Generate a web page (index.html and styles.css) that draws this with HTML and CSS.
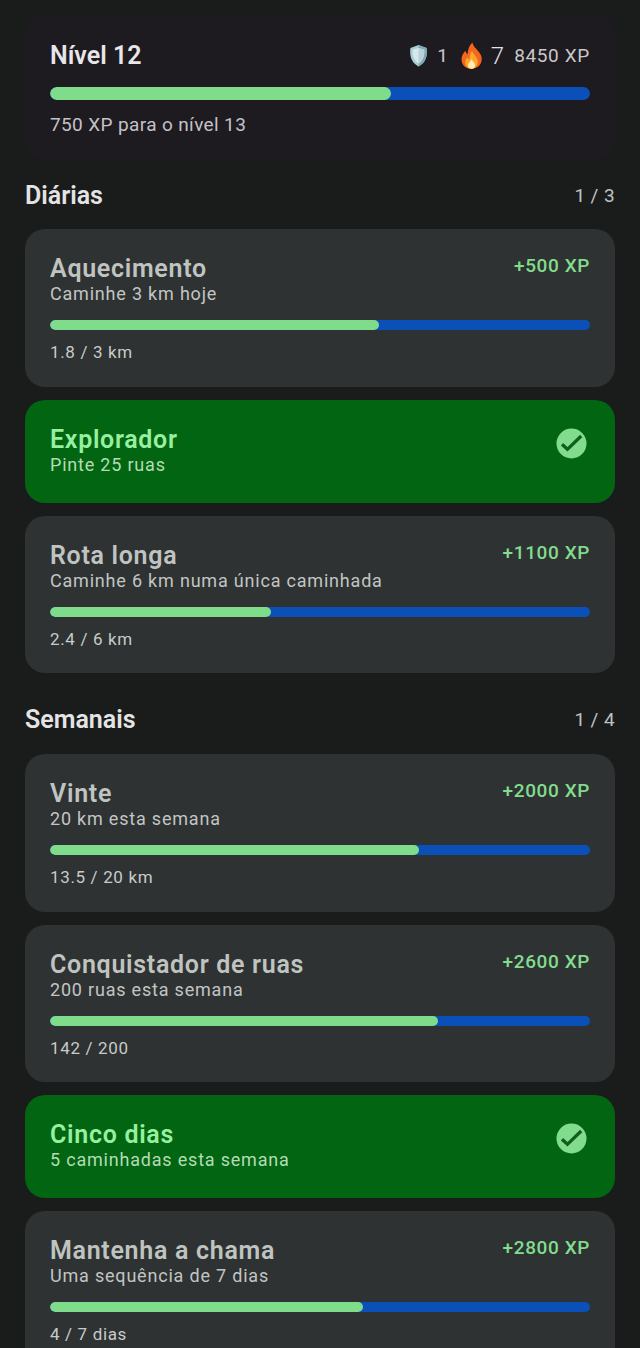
FILE: index.html
```html
<!DOCTYPE html>
<html lang="pt">
<head>
<meta charset="utf-8">
<title>Missões</title>
<link rel="stylesheet" href="styles.css">
</head>
<body>
<main class="screen">
  <section class="level">
    <div class="level-head">
      <h1 class="level-title">Nível 12</h1>
      <div class="stats">
        <svg class="emoji shield" viewBox="0 0 20 24" aria-hidden="true"><path d="M10 1 L18.5 4 C19.5 12 18 19 10 23.5 C2 19 .5 12 1.5 4 Z" fill="#a9cfd6"/><path d="M10 1 L18.5 4 C19.5 12 18 19 10 23.5 Z" fill="#7fa9b2"/><path d="M10 4 L16 6 C16.5 12 15 17 10 20.5 C5 17 3.5 12 4 6 Z" fill="#d8e8ea"/><path d="M10 4 L16 6 C16.5 12 15 17 10 20.5 Z" fill="#b7d2d8"/></svg>
        <span class="stat-num small">1</span>
        <svg class="emoji flame" viewBox="0 0 22 26" aria-hidden="true"><path d="M12 .5 C12.500 5 17.500 7.500 20 12.500 C22.500 18 19.500 25.800 11 25.800 C3.500 25.800 .2 19.500 1.800 14 C2.500 11.500 4 10 5 8.500 C5.600 10 6.200 11.200 7.200 12 C7.500 8 8.500 3.500 12 .5 Z" fill="#f4661c"/><path d="M11.500 8.500 C12.500 12 17 14.500 17 19 C17 23 14.500 25.800 11 25.800 C7.500 25.800 4.800 23 5 19.300 C5.100 17.500 6 16 7 15 C7.500 16 8.200 16.800 9 17 C9 14 9.800 11 11.500 8.500 Z" fill="#fca82e"/><path d="M11 16.500 C12 18.800 14.500 20 14.500 22.300 C14.500 24.300 13 25.800 11 25.800 C9 25.800 7.500 24.300 7.500 22.500 C7.500 20.300 10 18.800 11 16.500 Z" fill="#feeeb4"/></svg>
        <span class="stat-num big">7</span>
        <span class="stat-xp">8450 XP</span>
      </div>
    </div>
    <div class="bar"><div class="bar-fill" style="width:63.2%"></div></div>
    <p class="level-note">750 XP para o nível 13</p>
  </section>

  <section class="group">
    <div class="group-head"><h2 class="group-title">Diárias</h2><span class="group-count">1 / 3</span></div>
    <div class="quests">
      <article class="quest">
        <div class="quest-head">
          <div class="quest-text"><h3 class="quest-title">Aquecimento</h3><p class="quest-desc">Caminhe 3 km hoje</p></div>
          <span class="quest-xp">+500 XP</span>
        </div>
        <div class="bar"><div class="bar-fill" style="width:61%"></div></div>
        <p class="quest-progress">1.8 / 3 km</p>
      </article>
      <article class="quest done">
        <div class="quest-text"><h3 class="quest-title">Explorador</h3><p class="quest-desc">Pinte 25 ruas</p></div>
        <svg class="check" viewBox="0 0 32 32" aria-hidden="true"><circle cx="16" cy="16" r="15.500" fill="#82dc8d"/><path d="M6.200 16.800 L11.800 22 L26 8.300" fill="none" stroke="#115e1c" stroke-width="3.400"/></svg>
      </article>
      <article class="quest">
        <div class="quest-head">
          <div class="quest-text"><h3 class="quest-title">Rota longa</h3><p class="quest-desc">Caminhe 6 km numa única caminhada</p></div>
          <span class="quest-xp">+1100 XP</span>
        </div>
        <div class="bar"><div class="bar-fill" style="width:41%"></div></div>
        <p class="quest-progress">2.4 / 6 km</p>
      </article>
    </div>
  </section>

  <section class="group">
    <div class="group-head"><h2 class="group-title">Semanais</h2><span class="group-count">1 / 4</span></div>
    <div class="quests">
      <article class="quest">
        <div class="quest-head">
          <div class="quest-text"><h3 class="quest-title">Vinte</h3><p class="quest-desc">20 km esta semana</p></div>
          <span class="quest-xp">+2000 XP</span>
        </div>
        <div class="bar"><div class="bar-fill" style="width:68.400%"></div></div>
        <p class="quest-progress">13.5 / 20 km</p>
      </article>
      <article class="quest">
        <div class="quest-head">
          <div class="quest-text"><h3 class="quest-title">Conquistador de ruas</h3><p class="quest-desc">200 ruas esta semana</p></div>
          <span class="quest-xp">+2600 XP</span>
        </div>
        <div class="bar"><div class="bar-fill" style="width:71.900%"></div></div>
        <p class="quest-progress">142 / 200</p>
      </article>
      <article class="quest done">
        <div class="quest-text"><h3 class="quest-title">Cinco dias</h3><p class="quest-desc">5 caminhadas esta semana</p></div>
        <svg class="check" viewBox="0 0 32 32" aria-hidden="true"><circle cx="16" cy="16" r="15.500" fill="#82dc8d"/><path d="M6.200 16.800 L11.800 22 L26 8.300" fill="none" stroke="#115e1c" stroke-width="3.400"/></svg>
      </article>
      <article class="quest">
        <div class="quest-head">
          <div class="quest-text"><h3 class="quest-title">Mantenha a chama</h3><p class="quest-desc">Uma sequência de 7 dias</p></div>
          <span class="quest-xp">+2800 XP</span>
        </div>
        <div class="bar"><div class="bar-fill" style="width:58%"></div></div>
        <p class="quest-progress">4 / 7 dias</p>
      </article>
    </div>
  </section>
</main>
</body>
</html>
```

FILE: styles.css
```css
* { box-sizing: border-box; }
html, body { margin: 0; padding: 0; }
body {
  width: 640px;
  height: 1348px;
  overflow: hidden;
  background: #1a1c1c;
  font-family: Roboto, "Noto Sans", sans-serif;
}
h1, h2, h3, p { margin: 0; font-weight: inherit; }
.screen { padding: 14px 25px 0; }

.level {
  background: #1d1a20;
  border-radius: 20px;
  height: 146px;
  padding: 25px 25px 0;
}
.level-head { display: flex; justify-content: space-between; align-items: center; height: 33px; }
.level-title { font-size: 25px; font-weight: 600; color: #e8e6e8; }
.stats { display: flex; align-items: center; color: #c9c7c9; }
.emoji { display: block; }
.shield { width: 19px; height: 23px; margin-right: 9px; }
.flame { width: 23px; height: 27px; margin-left: 12px; margin-right: 8px; }
.stat-num.small { font-size: 19px; font-weight: 400; }
.stat-num.big { font-size: 24px; font-weight: 300; color: #e4e2e4; }
.stat-xp { font-size: 19px; margin-left: 10px; letter-spacing: .65px; }

.bar { height: 10px; border-radius: 5px; background: #0a50b8; overflow: hidden; }
.level .bar { height: 13px; border-radius: 7px; margin-top: 15px; }
.bar-fill { height: 100%; border-radius: 7px; background: #7fdc8b; }
.level-note { margin-top: 13px; font-size: 19px; color: #c4c2c6; letter-spacing: .37px; line-height: 24px; }

.group { margin-top: 20px; }
.group + .group { margin-top: 31.5px; }
.group-head { display: flex; justify-content: space-between; align-items: center; height: 30px; margin-bottom: 19px; }
.group-title { font-size: 25px; font-weight: 600; color: #e4e4e4; }
.group-count { font-size: 19px; color: #bfc2c1; letter-spacing: .4px; }

.quests { display: flex; flex-direction: column; gap: 13px; }
.quest {
  background: #2e3232;
  border-radius: 20px;
  height: 157.7px;
  padding: 26px 25px 0;
}
.quest-head { display: flex; justify-content: space-between; align-items: flex-start; height: 65px; }
.quest-title { font-size: 25px; font-weight: 600; color: #c0c4c0; letter-spacing: .7px; line-height: 27px; }
.quest-desc { font-size: 18px; color: #c2c5c3; letter-spacing: .8px; line-height: 24px; }
.quest-xp { font-size: 19px; font-weight: 500; color: #82dc8d; letter-spacing: .6px; line-height: 24px; margin-top: -1px; }
.quest-progress { margin-top: 10px; font-size: 17px; font-weight: 450; color: #c8cbc9; letter-spacing: .65px; line-height: 24px; }

.quest.done {
  background: #016512;
  height: 103px;
  display: flex;
  justify-content: space-between;
  align-items: flex-start;
  padding: 26px 28px 0 25px;
}
.done .quest-title { color: #97f09f; }
.done .quest-desc { color: #b4dcb4; }
.check { width: 31px; height: 31px; display: block; margin-top: 2px; }
```
